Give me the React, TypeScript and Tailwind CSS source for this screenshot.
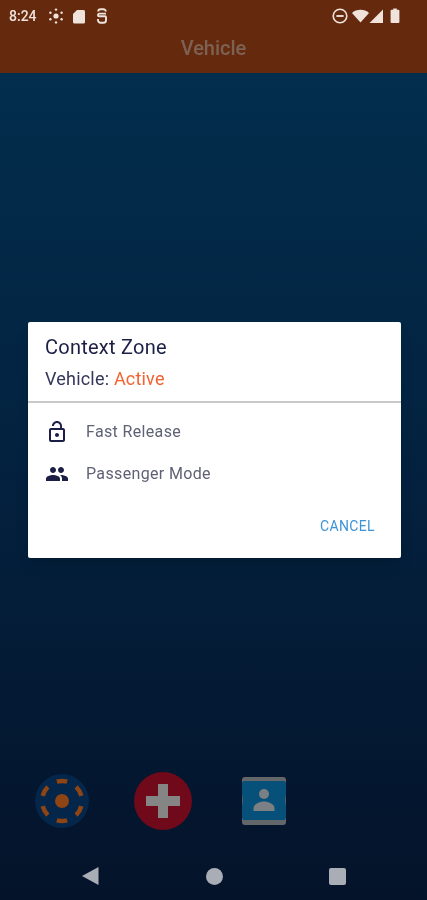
import React from "react";

const font = { fontFamily: "Roboto, sans-serif" };

function Arc({ a }: { a: number }) {
  const r = 20;
  const s = ((a - 15) * Math.PI) / 180;
  const e = ((a + 15) * Math.PI) / 180;
  const d = `M${29 + r * Math.cos(s)} ${29 + r * Math.sin(s)}A${r} ${r} 0 0 1 ${29 + r * Math.cos(e)} ${29 + r * Math.sin(e)}`;
  return <path d={d} />;
}

function StatusLeft() {
  return (
    <div className="flex items-center">
      <span className="text-[14px] leading-none font-medium text-[#efe3dc] w-[39px]">8:24</span>
      <svg width="16" height="16" viewBox="0 0 16 16" className="mr-[8px]" fill="#efe3dc">
        <circle cx="8" cy="8" r="2.6" />
        <circle cx="8" cy="1.6" r="1.2" />
        <circle cx="8" cy="14.4" r="1.2" />
        <circle cx="2.4" cy="4.8" r="1.2" />
        <circle cx="13.6" cy="4.8" r="1.2" />
        <circle cx="2.4" cy="11.2" r="1.2" />
        <circle cx="13.6" cy="11.2" r="1.2" />
      </svg>
      <svg width="14" height="15" viewBox="0 0 14 15" className="mr-[10px]" fill="#efe3dc">
        <path d="M5 1H11.5A1.5 1.5 0 0 1 13 2.5V13A1.5 1.5 0 0 1 11.5 14.5H2.5A1.5 1.5 0 0 1 1 13V5Z" />
      </svg>
      <svg width="12" height="16" viewBox="0 0 12 16" fill="none" stroke="#efe3dc" strokeWidth="1.9">
        <path d="M2.2 3.6A2.4 2.4 0 0 1 4.6 1.2H7.4A2.4 2.4 0 0 1 9.8 3.6" />
        <path d="M10 5.6H3.4A1.4 1.4 0 0 0 2 7V7.2A1 1 0 0 0 3 8.2H9A1 1 0 0 1 10 9.2V12.2A2.6 2.6 0 0 1 7.4 14.8H4.6A2.6 2.6 0 0 1 2 12.2V11" />
      </svg>
    </div>
  );
}

function StatusRight() {
  return (
    <div className="flex items-center">
      <svg width="16" height="16" viewBox="0 0 16 16" className="mr-[4px]" fill="none" stroke="#efe3dc" strokeWidth="1.6">
        <circle cx="8" cy="8" r="6.8" />
        <path d="M4.4 8H11.6" strokeWidth="1.9" />
      </svg>
      <svg width="17" height="14" viewBox="0 0 17 14" fill="#efe3dc">
        <path d="M0 4C2.2 2 5.2 0.8 8.5 0.8S14.8 2 17 4L8.5 13.6Z" />
      </svg>
      <svg width="14" height="14" viewBox="0 0 14 14" className="mr-[7px]" fill="#efe3dc">
        <path d="M14 0.5V14H0.5Z" />
      </svg>
      <svg width="10" height="16" viewBox="0 0 10 16" fill="#efe3dc">
        <path d="M3.2 0.6H6.8V1.8H8.4A1 1 0 0 1 9.4 2.8V14A1 1 0 0 1 8.4 15H1.6A1 1 0 0 1 .6 14V2.8A1 1 0 0 1 1.6 1.8H3.2Z" />
      </svg>
    </div>
  );
}

export default function App() {
  return (
    <div style={font} className="w-[427px] h-[900px] overflow-hidden flex flex-col bg-gradient-to-b from-[#02304f] via-[#032240] to-[#04132a] blur-[0.4px]">
      <header className="h-[73px] shrink-0 bg-[#652a0e] flex flex-col">
        <div className="h-[32px] flex items-center justify-between pl-[9px] pr-[27px]">
          <StatusLeft />
          <StatusRight />
        </div>
        <h1 className="text-center text-[20px] leading-[32px] font-medium text-[#7d6253]">Vehicle</h1>
      </header>

      <main className="flex-1 flex flex-col">
        <section className="mt-[249px] ml-[28px] mr-[26px] h-[236px] bg-white rounded-[2px] shadow-lg flex flex-col">
          <div className="px-[17px] pt-[13px] h-[81px] border-b-2 border-[#c9c9c9]">
            <div className="text-[20px] leading-[24px] tracking-[0.25px] text-[#1b1f45]">Context Zone</div>
            <div className="text-[18px] leading-[22px] tracking-[0.2px] mt-[9px] text-[#33375a]">
              Vehicle: <span className="text-[#f4622f]">Active</span>
            </div>
          </div>
          <div className="flex items-center h-[42px] mt-[8px] pl-[17px]">
            <span className="w-[41px] flex">
              <svg width="24" height="24" viewBox="0 0 24 24" fill="#1b1f45">
                <path d="M12 17c1.1 0 2-.9 2-2s-.9-2-2-2-2 .9-2 2 .9 2 2 2zm6-9h-1V6c0-2.76-2.24-5-5-5S7 3.24 7 6h1.9c0-1.71 1.39-3.1 3.1-3.1 1.71 0 3.1 1.39 3.1 3.1v2H6c-1.1 0-2 .9-2 2v10c0 1.1.9 2 2 2h12c1.1 0 2-.9 2-2V10c0-1.1-.9-2-2-2zm0 12H6V10h12v10z" />
              </svg>
            </span>
            <span className="text-[16px] tracking-[0.35px] text-[#5f6175]">Fast Release</span>
          </div>
          <div className="flex items-center h-[42px] pl-[17px]">
            <span className="w-[41px] flex">
              <svg width="24" height="24" viewBox="0 0 24 24" fill="#1b1f45">
                <path d="M16 11c1.66 0 2.99-1.34 2.99-3S17.66 5 16 5c-1.66 0-3 1.34-3 3s1.34 3 3 3zm-8 0c1.66 0 2.99-1.34 2.99-3S9.66 5 8 5C6.34 5 5 6.34 5 8s1.34 3 3 3zm0 2c-2.33 0-7 1.17-7 3.5V19h14v-2.5c0-2.33-4.67-3.5-7-3.5zm8 0c-.29 0-.62.02-.97.05 1.16.84 1.97 1.97 1.97 3.45V19h6v-2.5c0-2.33-4.67-3.5-7-3.5z" />
              </svg>
            </span>
            <span className="text-[16px] tracking-[0.35px] text-[#5f6175]">Passenger Mode</span>
          </div>
          <div className="flex justify-end pr-[26px] mt-[21px]">
            <span className="text-[14px] leading-[20px] tracking-[0.35px] text-[#3d94d6]">CANCEL</span>
          </div>
        </section>

        <div className="mt-[214px] flex items-center pl-[33px]">
          <svg width="58" height="58" viewBox="0 0 58 58" className="mr-[43px]">
            <circle cx="29" cy="29" r="27" fill="#03264a" />
            <circle cx="29" cy="29" r="7" fill="#8e4413" />
            <g fill="none" stroke="#8e4413" strokeWidth="4.5">
              <Arc a={-90} />
              <Arc a={-30} />
              <Arc a={30} />
              <Arc a={90} />
              <Arc a={150} />
              <Arc a={210} />
            </g>
          </svg>
          <svg width="58" height="58" viewBox="0 0 58 58" className="mr-[49px]">
            <circle cx="29" cy="29" r="29" fill="#700a1a" />
            <path d="M24 12H34V24H46V34H34V46H24V34H12V24H24Z" fill="#858585" />
          </svg>
          <svg width="46" height="48" viewBox="0 0 46 48">
            <path d="M4 0H42A3 3 0 0 1 45 3V45A3 3 0 0 1 42 48H4A3 3 0 0 1 1 45V3A3 3 0 0 1 4 0Z" fill="#63676a" />
            <path d="M3 4H43C44 4 45 5 45 6V18Q43.5 23.5 45 29V40C45 42 44 43 43 43H3C2 43 1 42 1 40V29Q2.5 23.5 1 18V6C1 5 2 4 3 4Z" fill="#07507a" />
            <circle cx="23" cy="17" r="5" fill="#7b8084" />
            <path d="M12.5 34V31C12.5 27 19 24.5 23 24.5S33.5 27 33.5 31V34Z" fill="#7b8084" />
          </svg>
        </div>

        <nav className="mt-[36px] flex items-center pl-[81px]">
          <svg width="18" height="20" viewBox="0 0 18 20" className="mr-[107px]" fill="#a9adb6">
            <path d="M17.5 1V19L1 10Z" />
          </svg>
          <span className="w-[17px] h-[17px] rounded-full bg-[#a9adb6] mr-[106px]" />
          <span className="w-[17px] h-[17px] rounded-[2px] bg-[#a9adb6]" />
        </nav>
      </main>
    </div>
  );
}
